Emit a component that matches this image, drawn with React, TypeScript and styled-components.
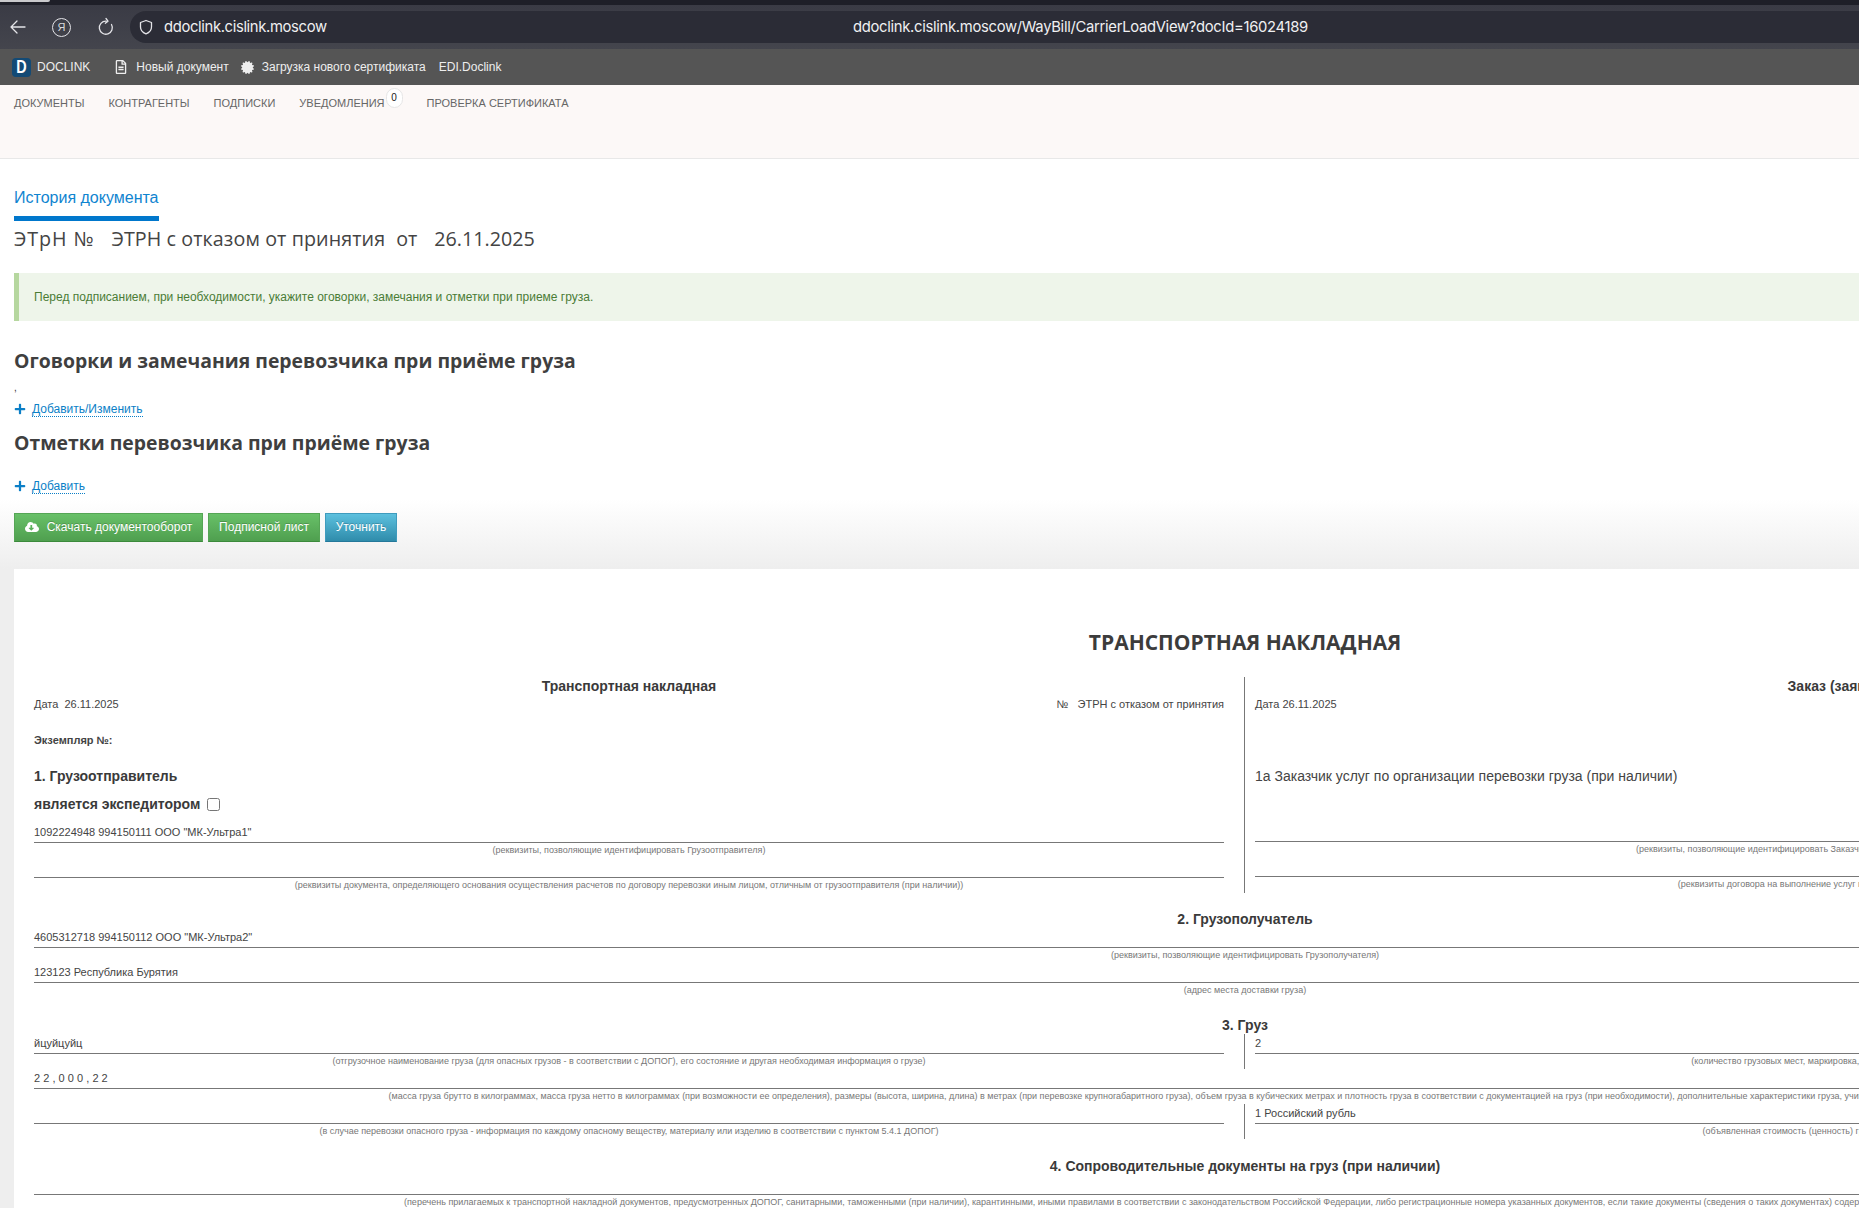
import React from "react";
import styled, { createGlobalStyle } from "styled-components";
import { FaCloudDownloadAlt, FaPlus, FaCertificate, FaRegFileAlt } from "react-icons/fa";

const Global = createGlobalStyle`
  html, body { margin: 0; padding: 0; width: 1859px; height: 1208px; overflow: hidden; background: #fff; }
  body { font-family: "Liberation Sans", Arial, sans-serif; color: #333; }
  * { box-sizing: border-box; }
`;

const Page = styled.div`
  width: 1859px;
  height: 1208px;
  overflow: hidden;
  display: flex;
  flex-direction: column;
`;

const TabStrip = styled.div`
  height: 5px;
  background: #1e1f28;
  flex: none;
`;
const TabStub = styled.div`
  width: 50px;
  height: 2px;
  background: #c9c9cc;
  border-radius: 0 0 4px 0;
`;

const AddressRow = styled.div`
  height: 44px;
  flex: none;
  background: linear-gradient(#3a3b45, #44454d);
  display: flex;
  align-items: center;
  padding-left: 9px;
  color: #e8e8ea;
`;
const BrowserIcon = styled.svg`
  width: 20px;
  height: 20px;
  fill: none;
  stroke: #e4e4e8;
  stroke-width: 1.3;
  stroke-linecap: round;
  stroke-linejoin: round;
  flex: none;
`;
const YaCircle = styled.span`
  width: 19px;
  height: 19px;
  border: 1.2px solid #e4e4e8;
  border-radius: 50%;
  margin-left: 23px;
  margin-right: 25px;
  display: flex;
  align-items: center;
  justify-content: center;
  font-size: 11px;
  color: #d8d8dc;
  flex: none;
`;
const AddressPill = styled.div`
  margin-left: 14px;
  flex: 1;
  height: 32px;
  background: #2b2c36;
  border-radius: 16px 0 0 16px;
  display: flex;
  align-items: center;
  padding-left: 6px;
  position: relative;
`;
const Domain = styled.span`
  font-family: "Inter", "Liberation Sans", sans-serif;
  font-size: 14.8px;
  letter-spacing: -0.35px;
  margin-left: 8px;
  color: #f0f0f2;
`;
const FullUrl = styled.span`
  position: absolute;
  left: 723px;
  font-family: "Inter", "Liberation Sans", sans-serif;
  font-size: 14.8px;
  letter-spacing: -0.3px;
  color: #f0f0f2;
  white-space: nowrap;
`;

const TopBar = styled.div`
  height: 36px;
  flex: none;
  background: #555;
  display: flex;
  align-items: center;
  padding-left: 12px;
  color: #eee;
  font-size: 12px;
`;
const Logo = styled.span`
  width: 19px;
  height: 19px;
  border-radius: 4px;
  background: #134a75;
  color: #fff;
  font-weight: 700;
  font-size: 18px;
  display: flex;
  align-items: center;
  justify-content: center;
  margin-right: 6px;
`;
const LogoMark = styled.span`
  display: block;
  transform: scaleX(0.8);
`;
const BarLink = styled.span<{ $gap: number }>`
  display: inline-flex;
  align-items: center;
  margin-left: ${(p) => p.$gap}px;
  gap: 8px;
  white-space: nowrap;
`;

const Nav = styled.nav`
  height: 74px;
  flex: none;
  background: #fcf8f7;
  border-bottom: 1px solid #e8e8e8;
  display: flex;
  align-items: flex-start;
  padding: 11px 0 0 14px;
  gap: 24px;
`;
const NavItem = styled.span`
  font-size: 11px;
  line-height: 14px;
  color: #666;
  text-transform: uppercase;
  white-space: nowrap;
  display: inline-flex;
`;
const Badge = styled.span`
  width: 17px;
  height: 20px;
  margin: -8px 0 0 1px;
  border: 1px solid #e6e6e6;
  border-radius: 9px;
  background: #fff;
  color: #222;
  font-size: 10px;
  line-height: 18px;
  text-align: center;
`;

const Main = styled.main`
  flex: 1;
  min-height: 0;
  background: linear-gradient(#fff 0, #fff 340px, #eeeeee 410px);
  padding-top: 30px;
`;
const Tab = styled.div`
  margin-left: 14px;
  width: 145px;
  height: 32px;
  border-bottom: 5px solid #0077cc;
  color: #0f84d0;
  font-size: 16px;
  line-height: 18px;
  white-space: nowrap;
`;
const DocTitle = styled.h1`
  margin: 4px 0 0 14px;
  display: flex;
  font-family: "Open Sans", sans-serif;
  font-weight: 400;
  font-size: 19.7px;
  line-height: 28px;
  color: #444;
  white-space: nowrap;
`;
const TitlePart = styled.span<{ $gap?: number; $track?: number }>`
  margin-left: ${(p) => p.$gap ?? 0}px;
  letter-spacing: ${(p) => p.$track ?? 0}px;
`;
const Alert = styled.div`
  margin: 20px 0 0 14px;
  height: 48px;
  background: #eef5ea;
  border-left: 5px solid #b6d79f;
  padding-left: 15px;
  display: flex;
  align-items: center;
  font-size: 12px;
  color: #4a7c36;
`;
const SectionTitle = styled.h3<{ $top: number }>`
  margin: ${(p) => p.$top}px 0 0 14px;
  font-family: "Open Sans", sans-serif;
  font-weight: 700;
  font-size: 19.4px;
  line-height: 28px;
  color: #3f3f3f;
`;
const Comma = styled.div`
  margin-left: 14px;
  font-size: 10px;
  line-height: 12px;
  height: 12px;
  margin-top: 7px;
`;
const AddRow = styled.div<{ $top: number }>`
  margin: ${(p) => p.$top}px 0 0 14px;
  height: 16px;
  display: flex;
  align-items: center;
  color: #0b7fc7;
  font-size: 12px;
  gap: 6px;
`;
const AddLink = styled.a`
  border-bottom: 1px dotted #0b7fc7;
  line-height: 14px;
`;
const Buttons = styled.div`
  margin: 19px 0 0 14px;
  display: flex;
  gap: 5px;
`;
const Button = styled.button<{ $kind: "green" | "blue"; $width: number }>`
  height: 29px;
  width: ${(p) => p.$width}px;
  border: 1px solid ${(p) => (p.$kind === "green" ? "#55a555" : "#3f9bbd")};
  border-bottom-color: ${(p) => (p.$kind === "green" ? "#3c8a3c" : "#24789a")};
  background: ${(p) =>
    p.$kind === "green"
      ? "linear-gradient(#68c068, #4f9f4f)"
      : "linear-gradient(#5cc0de, #2f8cab)"};
  color: #fff;
  text-shadow: 0 -1px 0 rgba(0, 0, 0, 0.2);
  font-family: "Liberation Sans", sans-serif;
  font-size: 12px;
  display: flex;
  align-items: center;
  justify-content: center;
  gap: 8px;
  padding: 0 0 2px;
  white-space: nowrap;
`;
const Paper = styled.section`
  margin: 27px 0 0 14px;
  height: 640px;
  background: #fff;
  padding: 57px 0 0 20px;
  overflow: hidden;
`;
const PaperInner = styled.div`
  width: 2422px;
`;
const PaperTitle = styled.h2`
  margin: 0;
  text-align: center;
  font-family: "Open Sans", sans-serif;
  font-weight: 700;
  font-size: 21px;
  line-height: 32px;
  color: #3c3c3c;
`;
const Columns = styled.div<{ $top?: number }>`
  display: grid;
  grid-template-columns: 1190px 1fr;
  margin-top: ${(p) => p.$top ?? 0}px;
`;
const LeftCol = styled.div``;
const RightCol = styled.div`
  margin-left: 20px;
  border-left: 1px solid #777;
  padding: 0 38px 0 10px;
`;
const ColHeading = styled.div`
  text-align: center;
  font-weight: 700;
  font-size: 14px;
  line-height: 18px;
  color: #3a3a3a;
`;
const SplitRow = styled.div`
  display: flex;
  justify-content: space-between;
  font-size: 11px;
  line-height: 18px;
  white-space: pre;
  color: #444;
`;
const Copy = styled.div`
  margin-top: 18px;
  font-size: 11px;
  font-weight: 700;
  line-height: 18px;
  color: #444;
`;
const Strong = styled.div`
  margin-top: 18px;
  font-size: 14px;
  font-weight: 700;
  line-height: 18px;
  color: #3a3a3a;
`;
const Forwarder = styled.div`
  margin-top: 10px;
  margin-bottom: 10px;
  font-size: 14px;
  font-weight: 700;
  line-height: 18px;
  color: #3a3a3a;
  display: flex;
  align-items: center;
  gap: 7px;
`;
const Check = styled.input`
  width: 13px;
  height: 13px;
  margin: 0;
`;
const CustomerTitle = styled.div`
  margin-top: 54px;
  margin-bottom: 37px;
  font-size: 14px;
  line-height: 18px;
  color: #444;
`;
const Value = styled.div<{ $spaced?: boolean }>`
  height: 20px;
  border-bottom: 1px solid #777;
  font-size: 11px;
  line-height: 18px;
  letter-spacing: ${(p) => (p.$spaced ? "3.1px" : "0")};
  color: #444;
  white-space: nowrap;
`;
const Note = styled.div`
  height: 15px;
  text-align: center;
  font-size: 9px;
  line-height: 14px;
  color: #777;
  white-space: nowrap;
`;
const Center = styled.div<{ $top: number }>`
  margin-top: ${(p) => p.$top}px;
  text-align: center;
  font-weight: 700;
  font-size: 14px;
  line-height: 18px;
  color: #3a3a3a;
`;

const Field: React.FC<{ value?: string; note: string; spaced?: boolean }> = ({ value, note, spaced }) => (
  <div>
    <Value $spaced={spaced}>{value}</Value>
    <Note>{note}</Note>
  </div>
);

export default function App() {
  return (
    <Page>
      <Global />
      <TabStrip><TabStub /></TabStrip>
      <AddressRow>
        <BrowserIcon viewBox="0 0 20 20"><path d="M16 10H2M8 4l-6 6 6 6" /></BrowserIcon>
        <YaCircle>Я</YaCircle>
        <BrowserIcon viewBox="0 0 20 20"><path d="M15.500 7.500A6.500 6.500 0 1 1 10 4.200M10 1.500l2 2.700-2.700 2" /></BrowserIcon>
        <AddressPill>
          <BrowserIcon viewBox="0 0 20 20"><path d="M10 3.500l5.500 2v4.500c0 3.500-2.500 5.700-5.500 6.800C7 15.700 4.500 13.500 4.500 10V5.500z" /></BrowserIcon>
          <Domain>ddoclink.cislink.moscow</Domain>
          <FullUrl>ddoclink.cislink.moscow/WayBill/CarrierLoadView?docId=16024189</FullUrl>
        </AddressPill>
      </AddressRow>
      <TopBar>
        <Logo><LogoMark>D</LogoMark></Logo>
        <span>DOCLINK</span>
        <BarLink $gap={24}><FaRegFileAlt size={14} />Новый документ</BarLink>
        <BarLink $gap={12}><FaCertificate size={13} />Загрузка нового сертификата</BarLink>
        <BarLink $gap={13}>EDI.Doclink</BarLink>
      </TopBar>
      <Nav>
        <NavItem>Документы</NavItem>
        <NavItem>Контрагенты</NavItem>
        <NavItem>Подписки</NavItem>
        <NavItem>Уведомления<Badge>0</Badge></NavItem>
        <NavItem>Проверка сертификата</NavItem>
      </Nav>
      <Main>
        <Tab>История документа</Tab>
        <DocTitle>
          <TitlePart $track={0.9}>ЭТрН №</TitlePart>
          <TitlePart $gap={17} $track={0.09}>ЭТРН с отказом от принятия</TitlePart>
          <TitlePart $gap={11}>от</TitlePart>
          <TitlePart $gap={17}>26.11.2025</TitlePart>
        </DocTitle>
        <Alert>Перед подписанием, при необходимости, укажите оговорки, замечания и отметки при приеме груза.</Alert>
        <SectionTitle $top={26}>Оговорки и замечания перевозчика при приёме груза</SectionTitle>
        <Comma>,</Comma>
        <AddRow $top={7}><FaPlus size={12} /><AddLink>Добавить/Изменить</AddLink></AddRow>
        <SectionTitle $top={12}>Отметки перевозчика при приёме груза</SectionTitle>
        <AddRow $top={21}><FaPlus size={12} /><AddLink>Добавить</AddLink></AddRow>
        <Buttons>
          <Button $kind="green" $width={189}><FaCloudDownloadAlt size={14} />Скачать документооборот</Button>
          <Button $kind="green" $width={112}>Подписной лист</Button>
          <Button $kind="blue" $width={72}>Уточнить</Button>
        </Buttons>
        <Paper>
          <PaperInner>
            <PaperTitle>ТРАНСПОРТНАЯ НАКЛАДНАЯ</PaperTitle>
            <Columns $top={19}>
              <LeftCol>
                <ColHeading>Транспортная накладная</ColHeading>
                <SplitRow>
                  <span>{"Дата  26.11.2025"}</span>
                  <span>{"№   ЭТРН с отказом от принятия"}</span>
                </SplitRow>
                <Copy>Экземпляр №:</Copy>
                <Strong>1. Грузоотправитель</Strong>
                <Forwarder>является экспедитором <Check type="checkbox" /></Forwarder>
                <Field value={'1092224948 994150111 ООО "МК-Ультра1"'} note="(реквизиты, позволяющие идентифицировать Грузоотправителя)" />
                <Field note="(реквизиты документа, определяющего основания осуществления расчетов по договору перевозки иным лицом, отличным от грузоотправителя (при наличии))" />
              </LeftCol>
              <RightCol>
                <ColHeading>Заказ (заявка)</ColHeading>
                <SplitRow><span>Дата 26.11.2025</span></SplitRow>
                <CustomerTitle>1а Заказчик услуг по организации перевозки груза (при наличии)</CustomerTitle>
                <Field note="(реквизиты, позволяющие идентифицировать Заказчика услуг по организации перевозки груза)" />
                <Field note="(реквизиты договора на выполнение услуг по организации перевозки груза)" />
              </RightCol>
            </Columns>
            <Center $top={17}>2. Грузополучатель</Center>
            <Field value={'4605312718 994150112 ООО "МК-Ультра2"'} note="(реквизиты, позволяющие идентифицировать Грузополучателя)" />
            <Field value="123123 Республика Бурятия" note="(адрес места доставки груза)" />
            <Center $top={18}>3. Груз</Center>
            <Columns>
              <LeftCol>
                <Field value="йцуйцуйц" note="(отгрузочное наименование груза (для опасных грузов - в соответствии с ДОПОГ), его состояние и другая необходимая информация о грузе)" />
              </LeftCol>
              <RightCol>
                <Field value="2" note="(количество грузовых мест, маркировка, вид тары и способ упаковки)" />
              </RightCol>
            </Columns>
            <Field spaced value="22,000,22" note="(масса груза брутто в килограммах, масса груза нетто в килограммах (при возможности ее определения), размеры (высота, ширина, длина) в метрах (при перевозке крупногабаритного груза), объем груза в кубических метрах и плотность груза в соответствии с документацией на груз (при необходимости), дополнительные характеристики груза, учитывающие отраслевые особенности (при необходимости)" />
            <Columns>
              <LeftCol>
                <Field note="(в случае перевозки опасного груза - информация по каждому опасному веществу, материалу или изделию в соответствии с пунктом 5.4.1 ДОПОГ)" />
              </LeftCol>
              <RightCol>
                <Field value="1 Российский рубль" note="(объявленная стоимость (ценность) груза (при необходимости))" />
              </RightCol>
            </Columns>
            <Center $top={18}>4. Сопроводительные документы на груз (при наличии)</Center>
            <Field note="(перечень прилагаемых к транспортной накладной документов, предусмотренных ДОПОГ, санитарными, таможенными (при наличии), карантинными, иными правилами в соответствии с законодательством Российской Федерации, либо регистрационные номера указанных документов, если такие документы (сведения о таких документах) содержатся в государственных информационных системах)" />
          </PaperInner>
        </Paper>
      </Main>
    </Page>
  );
}
